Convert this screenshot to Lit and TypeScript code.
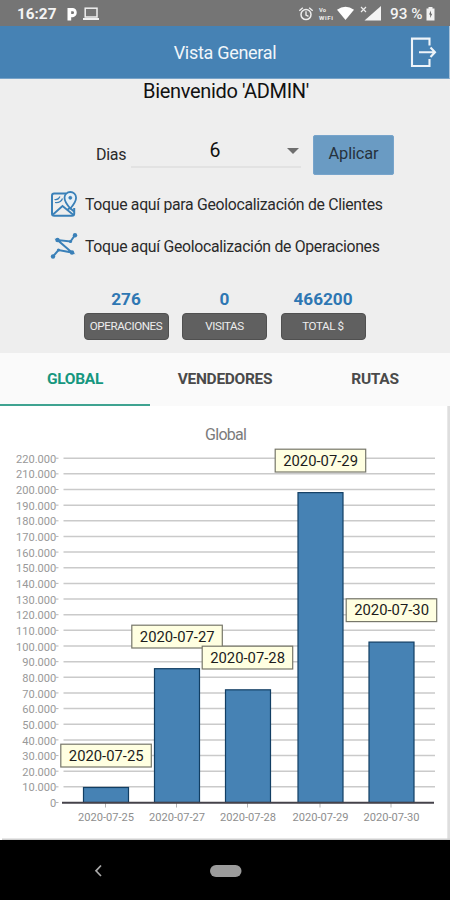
import { LitElement, html, svg, css } from "lit";
import { customElement } from "lit/decorators.js";
import { classMap } from "lit/directives/class-map.js";

interface Bar {
  day: string;
  value: number;
  center: number;
  tip: { x: number; y: number };
}

const BARS: Bar[] = [
  { day: "2020-07-25", value: 9600, center: 106, tip: { x: 60.6, y: 338 } },
  { day: "2020-07-27", value: 85500, center: 177, tip: { x: 131.6, y: 219 } },
  { day: "2020-07-28", value: 72000, center: 248, tip: { x: 202, y: 240 } },
  { day: "2020-07-29", value: 198000, center: 320.5, tip: { x: 275, y: 43 } },
  { day: "2020-07-30", value: 102500, center: 391.5, tip: { x: 346, y: 192.6 } },
];

const BASE = 396.5;
const STEP = 15.65;
const BAR_WIDTH = 45;

const yOf = (value: number) => BASE - (value / 10000) * STEP;
const thousands = (n: number) => (n === 0 ? "0" : `${n * 10}.000`);

@customElement("bar-chart")
export class BarChart extends LitElement {
  static styles = css`
    :host {
      display: block;
      height: 434px;
      background: #fff;
      font-family: Roboto, "Liberation Sans", sans-serif;
    }
    svg { display: block; }
    .title { font-size: 16px; fill: #7b7b7b; text-anchor: middle; }
    .grid { stroke: #cacaca; stroke-width: 1.5; }
    .tick { stroke: #b5b5b5; stroke-width: 1; }
    .axis { stroke: #45424a; stroke-width: 2; }
    .scale { font-size: 11.1px; fill: #999; text-anchor: end; }
    .day { font-size: 11.1px; fill: #8e8e8e; text-anchor: middle; }
    .bar { fill: #4682b4; stroke: #123e63; stroke-width: 1.2; }
    .tip { fill: #ffffe1; stroke: #77776a; stroke-width: 1.2; }
    .tip-text { font-size: 14.8px; fill: #1c1c1c; text-anchor: middle; }
    .frame-right { fill: #dedede; }
    .frame-bottom { fill: #cfcfcf; }
  `;

  render() {
    const levels = Array.from({ length: 23 }, (_, i) => i);
    return html`
      <svg width="450" height="434" viewBox="0 0 450 434">
        <rect class="frame-right" x="447.3" y="0" width="2.7" height="434"></rect>
        <rect class="frame-bottom" x="2" y="432.5" width="448" height="1.5"></rect>
        <text class="title" x="226" y="33.5" textLength="42">Global</text>
        ${levels.map((n) => {
          const y = yOf(n * 10000);
          return svg`
            <text class="scale" x="56.3" y=${y + 4.6}>${thousands(n)}</text>
            <line class="tick" x1="55.5" x2="58.5" y1=${y} y2=${y}></line>
            ${n ? svg`<line class="grid" x1="63.5" x2="435" y1=${y} y2=${y}></line>` : null}`;
        })}
        ${BARS.map((b) => {
          const top = yOf(b.value);
          return svg`
            <rect class="bar" x=${b.center - BAR_WIDTH / 2} y=${top} width=${BAR_WIDTH} height=${BASE - top}></rect>
            <line class="tick" x1=${b.center - 0.5} x2=${b.center - 0.5} y1=${BASE} y2=${BASE + 5}></line>
            <text class="day" x=${b.center} y="415">${b.day}</text>`;
        })}
        <line class="axis" x1="62" x2="434" y1=${BASE + 0.2} y2=${BASE + 0.2}></line>
        ${BARS.map(
          (b) => svg`
            <rect class="tip" x=${b.tip.x + 0.2} y=${b.tip.y + 0.2} width="90.5" height="22.8"></rect>
            <text class="tip-text" x=${b.tip.x + 45.6} y=${b.tip.y + 16.7}>${b.day}</text>`
        )}
      </svg>
    `;
  }
}

@customElement("app-root")
export class AppRoot extends LitElement {
  static styles = css`
    :host {
      display: flex;
      flex-direction: column;
      width: 450px;
      height: 900px;
      overflow: hidden;
      background: #eee;
      color: #2a2a2a;
      font-family: Roboto, "Liberation Sans", sans-serif;
    }
    * { box-sizing: border-box; }
    svg { display: block; flex: none; }
    .status {
      height: 26px;
      flex: none;
      display: flex;
      align-items: center;
      justify-content: space-between;
      padding: 2px 15px 0 17px;
      background: #757575;
      color: #f4f4f4;
      font-size: 15.3px;
      font-weight: 700;
    }
    .status-side { display: flex; align-items: center; }
    .clock { width: 49px; }
    .battery { font-weight: 500; width: 36px; font-size: 15.3px; white-space: nowrap; }
    .header {
      height: 53px;
      flex: none;
      display: grid;
      grid-template-columns: 40px 1fr 39px;
      align-items: center;
      background: #4682b4;
      border-bottom: 1px solid #78a3c8;
      border-right: 1px solid #a9c3da;
      color: #f1f6fa;
    }
    .header-title { grid-column: 2; text-align: center; font-size: 18px; letter-spacing: -0.3px; padding-top: 1px; }
    .welcome { height: 24px; flex: none; line-height: 24px; text-align: center; font-size: 20px; letter-spacing: -0.33px; color: #111; padding-left: 2px; }
    .filter { height: 39px; flex: none; display: flex; margin-top: 32px; padding-left: 96px; }
    .label { width: 35px; font-size: 16px; line-height: 40px; letter-spacing: -0.3px; }
    .select {
      width: 170px;
      height: 33px;
      display: grid;
      grid-template-columns: 1fr 13px;
      align-items: center;
      border-bottom: 2px solid #e2e2e2;
      font-size: 19.5px;
      color: #111;
      padding-right: 1px;
    }
    .select-value { text-align: center; padding-left: 12px; }
    .apply {
      width: 81px;
      height: 40px;
      margin-left: 12px;
      border: 1px solid #77a4cb;
      border-radius: 2px;
      background: #6a9bc3;
      color: #26323d;
      font: 400 16.4px Roboto, "Liberation Sans", sans-serif;
      letter-spacing: -0.15px;
      padding: 0 0 3px;
    }
    .links { display: flex; flex-direction: column; flex: none; padding: 9px 0 0 50px; }
    .link { display: flex; align-items: center; height: 42px; gap: 7px; font-size: 15.8px; letter-spacing: -0.3px; white-space: nowrap; }
    .stats { display: flex; gap: 13.5px; padding: 20px 0 0 83.5px; height: 86px; flex: none; }
    .stat { width: 85px; display: flex; flex-direction: column; align-items: center; }
    .stat-value { height: 26px; line-height: 24px; font-size: 17.2px; font-weight: 700; color: #2e77b3; }
    .stat-label {
      width: 85px;
      height: 27px;
      border: 1px solid #505050;
      border-radius: 4px;
      background: #606060;
      color: #ededed;
      font-size: 11.6px;
      line-height: 25px;
      text-align: center;
      letter-spacing: -0.4px;
    }
    .tabs { display: grid; grid-template-columns: repeat(3, 1fr); height: 53px; flex: none; background: #fafafa; }
    .tab {
      display: flex;
      align-items: center;
      justify-content: center;
      font-size: 15.5px;
      letter-spacing: -0.3px;
      font-weight: 700;
      color: #4a4a4a;
      padding-top: 1px;
      border-bottom: 2px solid transparent;
    }
    .active { color: #16977f; border-bottom-color: #3fa391; }
    .nav { flex: 1; background: #000; }
    .nav svg { width: 100%; height: 60px; }
  `;

  private stats = [
    ["276", "OPERACIONES"],
    ["0", "VISITAS"],
    ["466200", "TOTAL $"],
  ];

  private tabs = ["GLOBAL", "VENDEDORES", "RUTAS"];

  render() {
    return html`
      <div class="status">
        <div class="status-side">
          <span class="clock">16:27</span>
          <svg width="34" height="16" viewBox="66 6 34 16" fill="none" stroke="#f0f0f0">
            <path d="M67.5 8H73A4.7 4.7 0 0 1 73 17.2H71.2V20.5H67.5ZM71.2 11.2V14.1H72.6A1.45 1.45 0 0 0 72.6 11.2Z" fill="#fff" fill-rule="evenodd" stroke="none"></path>
            <rect x="85.2" y="8.2" width="11.8" height="8.8" stroke-width="1.5"></rect>
            <path d="M83 19H99" stroke-width="2"></path>
          </svg>
        </div>
        <div class="status-side">
          <svg width="92" height="20" viewBox="297 3 92 20" fill="none" stroke="#eee">
            <circle cx="305" cy="13.6" r="5" stroke-width="1.5"></circle>
            <path d="M305 10.3V14L307.5 15.4M298.3 9.7L301.8 6.8M308.2 6.8L311.7 9.7" stroke-width="1.4"></path>
            <text x="318" y="10.6" font-size="5.8" font-weight="700" fill="#eee" stroke="none">Vo</text>
            <text x="318" y="18.6" font-size="6.2" font-weight="700" fill="#eee" stroke="none" textLength="14">WiFi</text>
            <path d="M336 8.8Q344.5 2.8 353 8.8L344.5 19Z" fill="#fff" stroke="none"></path>
            <path d="M360 6L365 11M365 6L360 11" stroke-width="1.2"></path>
            <path d="M380 5V19.5H363.5Z" fill="#f4f4f4" stroke="none"></path>
          </svg>
          <span class="battery">93 %</span>
          <svg width="9" height="14" viewBox="0 0 9 14">
            <path d="M2.5 0H6.5V1.5H8.5V13.5H.5V1.5H2.5Z" fill="#f2f2f2"></path>
            <path d="M5 3.5L3 7.5H4.2V11L6.2 6.8H5Z" fill="#666"></path>
          </svg>
        </div>
      </div>

      <div class="header">
        <div class="header-title">Vista General</div>
        <svg width="28" height="32" viewBox="0 0 28 32" fill="none" stroke="#eef4f9" stroke-width="2.1">
          <path d="M19.5 9.5V2.6H2V30H19.5V23M9 16.2H25M20.5 11.5L25 16.2L20.5 21"></path>
        </svg>
      </div>

      <div class="welcome">Bienvenido 'ADMIN'</div>

      <div class="filter">
        <span class="label">Dias</span>
        <div class="select">
          <span class="select-value">6</span>
          <svg width="12" height="6" viewBox="0 0 12 6"><path d="M0 0H12L6 6Z" fill="#6e6e6e"></path></svg>
        </div>
        <button class="apply">Aplicar</button>
      </div>

      <div class="links">
        <div class="link">
          <svg width="28" height="28" viewBox="0 0 28 28" fill="none" stroke="#3a80b8" stroke-width="2">
            <path d="M16 3.5H4.2Q2 3.5 2 5.7V23.5Q2 25.7 4.2 25.7H22Q24.2 25.7 24.2 23.5V18"></path>
            <path d="M3 24.5L12.5 16L23.5 25M17 20L20 18L24 21.5" stroke-width="1.8"></path>
            <path d="M4.5 9.5Q8 10.5 10 6.5M5 12.5Q11 13 12.5 8.5" stroke-width="1.2"></path>
            <path d="M20.3 18.5Q14.5 12 14.5 7.8A5.8 5.8 0 0 1 26.1 7.8Q26.1 12 20.3 18.5Z" fill="#e7f0f7" stroke-width="1.8"></path>
            <circle cx="20.3" cy="7.8" r="1.5" fill="#3a80b8" stroke-width="0.8"></circle>
          </svg>
          <span>Toque aquí para Geolocalización de Clientes</span>
        </div>
        <div class="link">
          <svg width="28" height="28" viewBox="0 0 28 28" fill="#3a80b8" stroke="#3a80b8" stroke-width="2">
            <path d="M3 24.5L8.5 18L22 20.5L7.5 8L20.5 9.5L25 3" fill="none"></path>
            <g stroke="none">
              <circle cx="3" cy="24.5" r="2.2"></circle>
              <circle cx="8.5" cy="18" r="1.6"></circle>
              <circle cx="22" cy="20.5" r="2.2"></circle>
              <circle cx="7.5" cy="8" r="2.2"></circle>
              <circle cx="20.5" cy="9.5" r="1.6"></circle>
              <circle cx="25" cy="3.2" r="2.2"></circle>
            </g>
          </svg>
          <span>Toque aquí Geolocalización de Operaciones</span>
        </div>
      </div>

      <div class="stats">
        ${this.stats.map(
          ([value, label]) => html`
            <div class="stat">
              <span class="stat-value">${value}</span>
              <span class="stat-label">${label}</span>
            </div>`
        )}
      </div>

      <div class="tabs">
        ${this.tabs.map(
          (name, i) => html`<div class=${classMap({ tab: true, active: i === 0 })}>${name}</div>`
        )}
      </div>

      <bar-chart></bar-chart>

      <div class="nav">
        <svg viewBox="0 0 450 60">
          <path d="M101 25.5L96 30.8L101 36" fill="none" stroke="#aaa" stroke-width="1.7"></path>
          <rect x="210" y="25" width="31.5" height="12" rx="6" fill="#9b9b9b"></rect>
        </svg>
      </div>
    `;
  }
}
